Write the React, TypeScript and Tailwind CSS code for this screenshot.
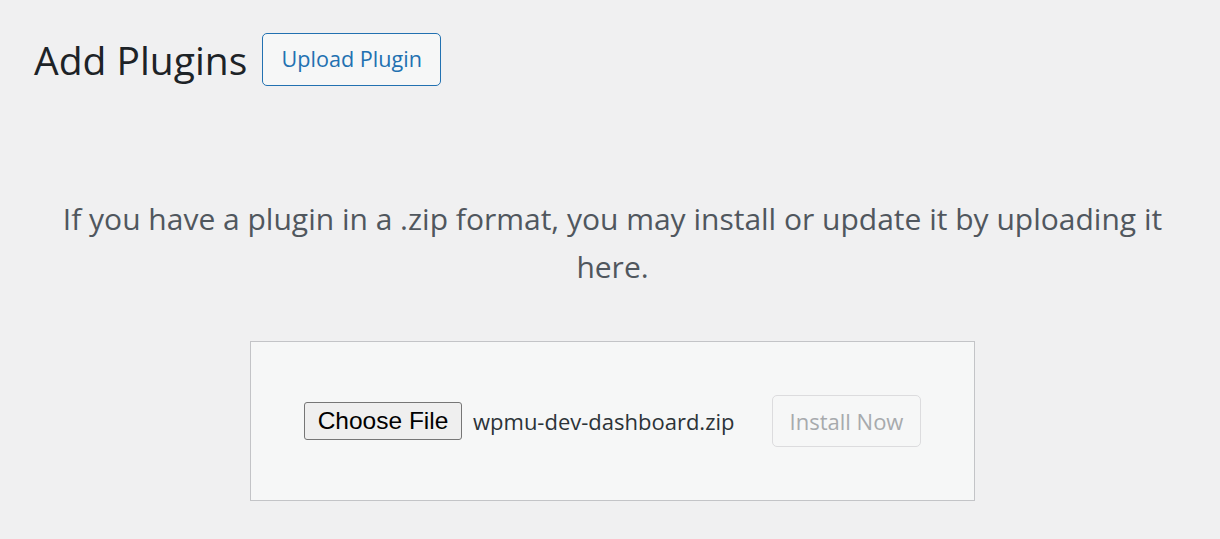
export default function App() {
  return (
    <div className="min-h-screen bg-[#f0f0f1] pl-[34px] pr-[29px] pt-[33px] font-['Open_Sans',sans-serif] text-[#2c3338]">
      <div className="flex items-center">
        <h1 className="text-[39px] leading-[53px] font-normal text-[#1d2327]">Add Plugins</h1>
        <button className="ml-[15px] h-[53px] w-[179px] rounded-[5px] border border-[#2271b1] bg-[#f6f7f7] text-[21.6px] text-[#2271b1]">
          Upload Plugin
        </button>
      </div>

      <p className="mt-[109px] text-center text-[30px] leading-[48px] text-[#50575e]">
        If you have a plugin in a .zip format, you may install or update it by uploading it here.
      </p>

      <div className="mx-auto mt-[50px] flex h-[160px] w-[725px] items-center justify-between border border-[#c3c4c7] bg-[#f6f7f7] px-[53px]">
        <div className="flex items-center">
          <button className="h-[38px] w-[158px] rounded-[3px] border border-[#767676] bg-[#efefef] font-['Liberation_Sans',sans-serif] text-[24.5px] text-black">
            Choose File
          </button>
          <span className="ml-[11px] text-[22px] text-[#2c3338]">wpmu-dev-dashboard.zip</span>
        </div>
        <button
          disabled
          className="h-[52px] w-[149px] rounded-[5px] border border-[#dcdcde] bg-[#f6f7f7] text-[22px] text-[#a7aaad]"
        >
          Install Now
        </button>
      </div>
    </div>
  );
}
